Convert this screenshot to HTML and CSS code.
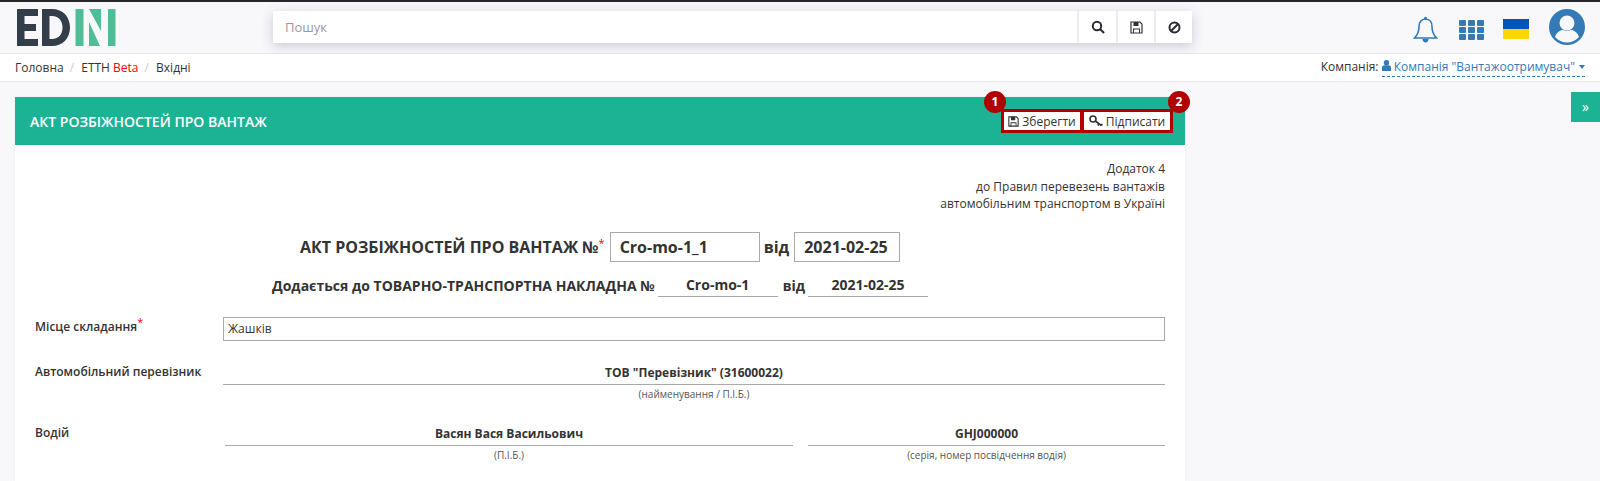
FILE: index.html
```html
<!DOCTYPE html>
<html lang="uk">
<head>
    <meta charset="UTF-8">
    <meta name="viewport" content="width=device-width, initial-scale=1.0">
    <title>EDIN</title>
    <link rel="stylesheet" href="styles.css">
</head>
<body>
    <header class="topbar">
        <svg class="logo" width="99" height="37" viewBox="0 0 99 37">
            <path fill="#343e4b" d="M0 0h21v7H7.500v8H19v7H7.500v8H21v7H0z"/>
            <path fill="#343e4b" fill-rule="evenodd" d="M25 0h10c11 0 18 8 18 18.500S46 37 35 37H25zM32.500 7v23H35c7 0 10.500-5 10.500-11.500S42 7 35 7z"/>
            <rect fill="#4fbd95" x="58.500" width="8" height="37"/>
            <path fill="#4fbd95" d="M72 0h12v22zM72 13l11 24H72z"/>
            <rect fill="#4fbd95" x="91" width="7.500" height="37"/>
        </svg>

        <div class="search">
            <div class="search-input">Пошук</div>
            <button class="search-btn">
                <svg width="14" height="14" viewBox="0 0 14 14"><circle cx="6" cy="6" r="4.200" fill="none" stroke="#2b2b33" stroke-width="2"/><path d="M9 9l4 4" stroke="#2b2b33" stroke-width="2.200"/></svg>
            </button>
            <button class="search-btn">
                <svg width="13" height="13" viewBox="0 0 13 13"><path fill="none" stroke="#333" stroke-width="1.200" d="M1 1h9l2 2v9H1z"/><path fill="#333" d="M3.500 1h5v4h-5zM3 7.500h7V12H9V8.500H4V12H3z"/></svg>
            </button>
            <button class="search-btn">
                <svg width="13" height="13" viewBox="0 0 13 13"><circle cx="6.500" cy="6.500" r="5" fill="none" stroke="#2b2b33" stroke-width="2"/><path d="M3 10l7-7" stroke="#2b2b33" stroke-width="2"/></svg>
            </button>
        </div>

        <div class="top-icons">
            <svg class="bell" width="25" height="27" viewBox="0 0 25 27"><path fill="none" stroke="#337ab7" stroke-width="1.600" d="M12.500 3c4.500 0 6.500 3.500 6.500 7.500 0 5 1 8 4.500 11.500H1.500C5 18.500 6 15.500 6 10.500 6 6.500 8 3 12.500 3z"/><circle cx="12.500" cy="2.300" r="1.500" fill="#337ab7"/><path fill="#337ab7" d="M9.500 23h6c0 2-1.300 3.500-3 3.500s-3-1.500-3-3.500z"/></svg>
            <div class="apps">
                <i></i><i></i><i></i><i></i><i></i><i></i><i></i><i></i><i></i>
            </div>
            <div class="flag"></div>
            <svg class="avatar" width="36" height="36" viewBox="0 0 36 36"><circle cx="18" cy="18" r="18" fill="#337ab7"/><circle cx="18" cy="14" r="7.500" fill="#f8f8fb"/><path fill="#f8f8fb" d="M6 28c2-5.500 6-7 8-7 1.500 1 6.500 1 8 0 2 0 6 1.500 8 7-3 3.500-7.500 5.500-12 5.500S9 31.500 6 28z"/></svg>
        </div>
    </header>

    <nav class="crumbs">
        <div class="crumb-list">
            <a>Головна</a><span class="sep">/</span>
            <a>ЕТТН <b class="beta">Beta</b></a><span class="sep">/</span>
            <a>Вхідні</a>
        </div>
        <div class="company">
            Компанія:
            <span class="company-link">
                <svg width="9" height="11" viewBox="0 0 9 11"><circle cx="4.500" cy="2.700" r="2.700" fill="#337ab7"/><path fill="#337ab7" d="M0 11V7.500C0 6 1.200 5.200 2.500 5.200h4C7.800 5.200 9 6 9 7.500V11z"/></svg>
                Компанія "Вантажоотримувач"<i class="caret"></i>
            </span>
        </div>
    </nav>

    <div class="content">
        <main class="card">
            <div class="card-head">
                <h1>АКТ РОЗБІЖНОСТЕЙ ПРО ВАНТАЖ</h1>
                <div class="actions">
                    <span class="badge badge-1">1</span>
                    <span class="badge badge-2">2</span>
                    <button class="action action-save">
                        <svg width="11" height="11" viewBox="0 0 13 13"><path fill="none" stroke="#333" stroke-width="1.300" d="M1 1h9l2 2v9H1z"/><path fill="#333" d="M3.500 1h5v4h-5zM3 7.500h7V12H9V8.500H4V12H3z"/></svg>
                        Зберегти
                    </button>
                    <button class="action action-sign">
                        <svg width="14" height="12" viewBox="0 0 14 12"><circle cx="4" cy="4" r="3" fill="none" stroke="#333" stroke-width="1.600"/><path d="M6.300 6l6 4.500M10 8.500l-1.200 2M12.300 10.500l1-1.500" stroke="#333" stroke-width="1.600" fill="none"/></svg>
                        Підписати
                    </button>
                </div>
            </div>

            <div class="card-body">
                <div class="note">
                    Додаток 4<br>
                    до Правил перевезень вантажів<br>
                    автомобільним транспортом в Україні
                </div>

                <div class="act-title">
                    <span class="act-name">АКТ РОЗБІЖНОСТЕЙ ПРО ВАНТАЖ №<sup class="req">*</sup></span>
                    <div class="box box-num">Cro-mo-1_1</div>
                    <span>від</span>
                    <div class="box box-date">2021-02-25</div>
                </div>

                <div class="act-sub">
                    <span>Додається до ТОВАРНО-ТРАНСПОРТНА НАКЛАДНА №</span>
                    <div class="under">Cro-mo-1</div>
                    <span class="sub-from">від</span>
                    <div class="under">2021-02-25</div>
                </div>

                <div class="row row-place">
                    <div class="label">Місце складання<sup class="req">*</sup></div>
                    <div class="place-input">Жашків</div>
                </div>

                <div class="row row-carrier">
                    <div class="label">Автомобільний перевізник</div>
                    <div class="field">
                        <div class="value">ТОВ "Перевізник" (31600022)</div>
                        <div class="hint">(найменування / П.І.Б.)</div>
                    </div>
                </div>

                <div class="row row-driver">
                    <div class="label">Водій</div>
                    <div class="field field-name">
                        <div class="value">Васян Вася Васильович</div>
                        <div class="hint">(П.І.Б.)</div>
                    </div>
                    <div class="field field-doc">
                        <div class="value">GHJ000000</div>
                        <div class="hint">(серія, номер посвідчення водія)</div>
                    </div>
                </div>
            </div>
        </main>

        <button class="side-toggle">»</button>
    </div>
</body>
</html>
```

FILE: styles.css
```css
* {
    box-sizing: border-box;
}
html, body {
    height: 100%;
}
body {
    margin: 0;
    display: flex;
    flex-direction: column;
    overflow: hidden;
    font-family: "Open Sans", "Noto Sans", sans-serif;
    font-size: 12px;
    color: #333;
    background-color: #f8f8fb;
}
button {
    font-family: inherit;
}

/* top bar */
.topbar {
    flex: none;
    height: 54px;
    display: flex;
    align-items: flex-start;
    border-top: 2px solid #26262b;
    border-bottom: 1px solid #e7e7ea;
    padding: 7px 0 0 17px;
}
.logo {
    flex: none;
}
.search {
    flex: none;
    width: 919px;
    height: 32px;
    margin: 2px 0 0 157px;
    display: flex;
    background-color: #fff;
    box-shadow: 0 3px 12px rgba(60, 60, 90, 0.25);
}
.search-input {
    flex: 1;
    padding: 0 12px;
    line-height: 32px;
    font-size: 13px;
    color: #999;
}
.search-btn {
    width: 38px;
    padding: 0;
    border: none;
    border-left: 2px solid #ececef;
    background: #fff;
    display: flex;
    align-items: center;
    justify-content: center;
}
.search-btn:first-of-type {
    width: 39px;
}
.top-icons {
    flex: 1;
    display: flex;
    align-items: flex-start;
    padding-left: 221px;
}
.bell {
    margin-top: 7px;
}
.apps {
    width: 25px;
    margin: 11px 0 0 21px;
    display: grid;
    grid-template-columns: repeat(3, 7px);
    grid-auto-rows: 6px;
    gap: 1px 2px;
}
.apps i {
    background-color: #337ab7;
    border-radius: 1px;
}
.flag {
    width: 26px;
    height: 20px;
    margin: 10px 0 0 19px;
    background: linear-gradient(#0057b8 50%, #ffd700 50%);
}
.avatar {
    margin: 0 0 0 20px;
}

/* breadcrumbs */
.crumbs {
    flex: none;
    height: 28px;
    display: flex;
    justify-content: space-between;
    align-items: center;
    padding: 0 15px 1px 15px;
    background-color: #fff;
    border-bottom: 1px solid #e7e7ea;
}
.sep {
    margin: 0 4px 0 6px;
    color: #ccc;
}
.beta {
    font-weight: 400;
    color: #f00;
}
.company-link {
    display: inline-block;
    color: #337ab7;
    border-bottom: 1px dashed #337ab7;
    padding-bottom: 1px;
}
.caret {
    display: inline-block;
    margin-left: 4px;
    vertical-align: middle;
    border-top: 4px solid #337ab7;
    border-left: 3.5px solid transparent;
    border-right: 3.5px solid transparent;
}

/* content */
.content {
    flex: 1;
    min-height: 0;
    display: flex;
    align-items: flex-start;
    padding: 15px 0 0 15px;
}
.card {
    flex: none;
    width: 1170px;
    height: 100%;
    background-color: #fff;
    box-shadow: 0 0 2px rgba(0, 0, 0, 0.06);
}
.card-head {
    height: 48px;
    display: flex;
    justify-content: space-between;
    align-items: flex-start;
    padding: 12px 12px 0 15px;
    background-color: #1bb394;
}
.card-head h1 {
    margin: 3px 0 0;
    font-size: 14px;
    line-height: 20px;
    font-weight: 600;
    color: #fff;
}
.actions {
    position: relative;
    display: flex;
}
.action {
    height: 24px;
    padding: 0;
    display: flex;
    align-items: center;
    justify-content: center;
    gap: 3px;
    font-size: 12px;
    color: #333;
    background-color: #fff;
    border: 3px solid #b00000;
}
.action-save {
    width: 82px;
}
.action-sign {
    width: 92px;
    margin-left: -2px;
}
.badge {
    position: absolute;
    top: -18px;
    width: 22px;
    height: 22px;
    border-radius: 50%;
    text-align: center;
    font-size: 12px;
    font-weight: 700;
    line-height: 22px;
    color: #fff;
    background-color: #b00000;
}
.badge-1 {
    left: -17px;
}
.badge-2 {
    right: -17px;
}

.card-body {
    padding: 15px 20px 0;
}
.note {
    text-align: right;
    line-height: 17.500px;
}
.req {
    color: #f00;
    font-size: 11px;
    font-weight: 400;
    line-height: 0;
}

.act-title {
    display: flex;
    align-items: center;
    margin: 19px 0 0 265px;
    font-size: 16px;
    font-weight: 700;
    gap: 4px;
}
.act-name {
    margin-right: 1px;
}
.box {
    height: 30px;
    padding: 0 9px;
    line-height: 28px;
    border: 1px solid #aaa;
}
.box-num {
    width: 150px;
}
.box-date {
    width: 106px;
    margin-left: 1px;
}
.act-sub {
    display: flex;
    align-items: flex-end;
    margin: 11px 0 0 237px;
    font-size: 14px;
    font-weight: 700;
}
.under {
    width: 120px;
    height: 24px;
    margin-left: 3px;
    text-align: center;
    line-height: 23px;
    border-bottom: 1px solid #aaa;
}
.sub-from {
    margin-left: 5px;
    line-height: 23px;
}
.act-sub > span {
    line-height: 23px;
}

.row {
    display: flex;
}
.label {
    flex: none;
    width: 188px;
    font-weight: 600;
}
.row-place {
    margin-top: 20px;
}
.row-place .label {
    padding-top: 1px;
}
.place-input {
    flex: 1;
    height: 24px;
    padding: 0 4px;
    line-height: 22px;
    border: 1px solid #aaa;
}
.row-carrier {
    margin-top: 22px;
}
.row-carrier .field {
    flex: 1;
}
.value {
    height: 22px;
    text-align: center;
    font-weight: 700;
    line-height: 20px;
    border-bottom: 1px solid #aaa;
}
.hint {
    margin-top: 2px;
    text-align: center;
    font-size: 10px;
    line-height: 15px;
    color: #555;
}
.row-driver {
    margin-top: 22px;
}
.field-name {
    width: 568px;
    margin-left: 2px;
}
.field-doc {
    flex: 1;
    margin-left: 15px;
}

.side-toggle {
    flex: none;
    width: 29px;
    height: 30px;
    margin: -5px 0 0 386px;
    padding: 0;
    border: none;
    font-size: 14px;
    line-height: 28px;
    color: #fff;
    background-color: #1bb394;
}
```
